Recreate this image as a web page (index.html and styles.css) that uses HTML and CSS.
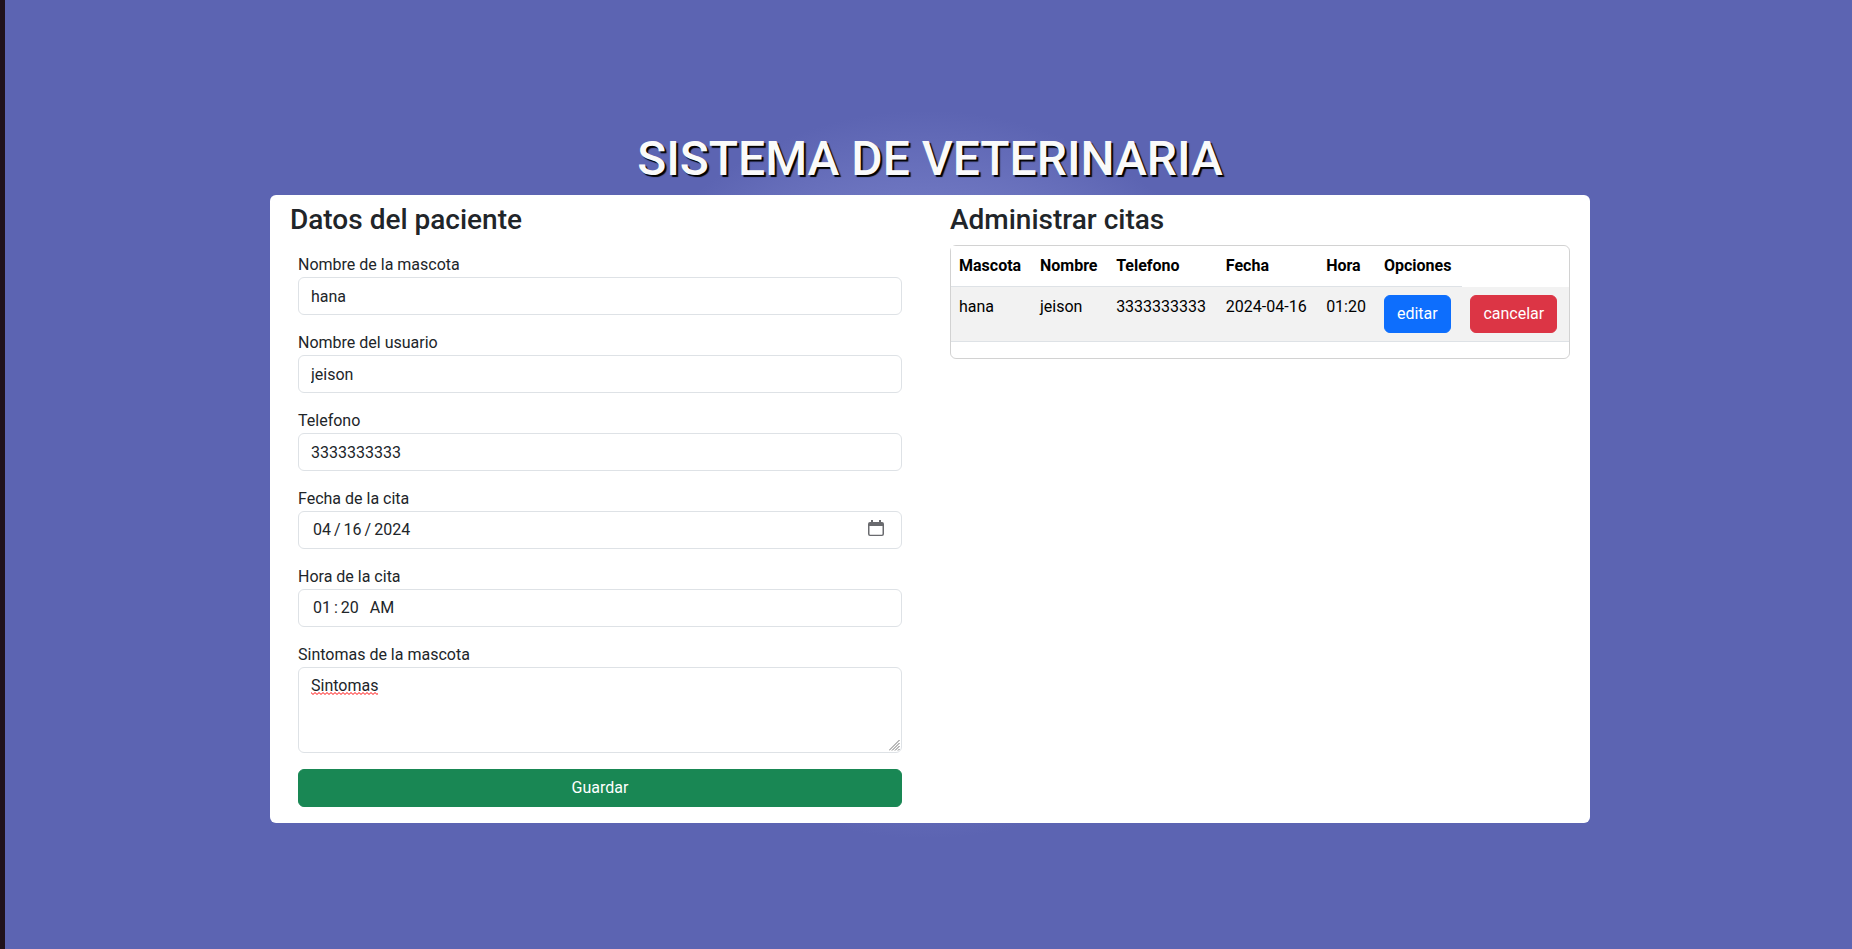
FILE: index.html
```html
<!DOCTYPE html>
<html lang="es">
<head>
<meta charset="utf-8">
<title>Sistema de veterinaria</title>
<link rel="stylesheet" href="styles.css">
</head>
<body>
<main class="container">
  <h1 class="title">SISTEMA DE VETERINARIA</h1>
  <div class="panel">
    <section class="column">
      <h3 class="subtitle">Datos del paciente</h3>
      <form class="form">
        <div class="field">
          <label for="mascota">Nombre de la mascota</label>
          <input class="control" id="mascota" type="text" value="hana">
        </div>
        <div class="field">
          <label for="usuario">Nombre del usuario</label>
          <input class="control" id="usuario" type="text" value="jeison">
        </div>
        <div class="field">
          <label for="telefono">Telefono</label>
          <input class="control" id="telefono" type="text" value="3333333333">
        </div>
        <div class="field">
          <label for="fecha">Fecha de la cita</label>
          <input class="control" id="fecha" type="date" value="2024-04-16">
        </div>
        <div class="field">
          <label for="hora">Hora de la cita</label>
          <input class="control control-time" id="hora" type="time" value="01:20">
        </div>
        <div class="field field-text">
          <label for="sintomas">Sintomas de la mascota</label>
          <textarea class="control" id="sintomas" rows="3" spellcheck="false">Sintomas</textarea>
          <span class="spelling" aria-hidden="true"></span>
        </div>
        <button class="btn btn-success" type="button">Guardar</button>
      </form>
    </section>
    <section class="column">
      <h3 class="subtitle">Administrar citas</h3>
      <div class="card">
        <table class="table">
          <thead>
            <tr><th>Mascota</th><th>Nombre</th><th>Telefono</th><th>Fecha</th><th>Hora</th><th>Opciones</th></tr>
          </thead>
          <tbody>
            <tr>
              <td>hana</td><td>jeison</td><td>3333333333</td><td>2024-04-16</td><td>01:20</td>
              <td><button class="btn btn-primary" type="button">editar</button></td>
              <td><button class="btn btn-danger" type="button">cancelar</button></td>
            </tr>
          </tbody>
        </table>
      </div>
    </section>
  </div>
</main>
</body>
</html>
```
FILE: styles.css
```css
*, *::before, *::after { box-sizing: border-box; }

body {
  margin: 0;
  min-height: 100vh;
  display: flex;
  align-items: center;
  justify-content: center;
  padding: 3px 0 0 3px;
  border-left: 5px solid #20121c;
  background: radial-gradient(circle, #a6aeee 0%, #5c64b2 35%);
  color: #212529;
  font: 400 16px/24px Roboto, sans-serif;
}

.container { width: 100%; max-width: 1320px; }

.title {
  margin: 0 0 6px;
  font-size: 48px;
  line-height: 60px;
  font-weight: 500;
  text-align: center;
  color: #fafafa;
  text-shadow: 2px 2px 1px #000;
}

.panel {
  display: grid;
  grid-template-columns: 1fr 1fr;
  background: #fff;
  border-radius: 6px;
}

.column { padding: 8px 20px; min-width: 0; }

.subtitle {
  margin: 0 0 8px;
  font-size: 28px;
  line-height: 34px;
  font-weight: 500;
}

.form { padding: 8px; }
.field { margin-bottom: 16px; }
.field label { display: block; }

.control {
  display: block;
  width: 100%;
  height: 38px;
  padding: 6px 12px;
  border: 1px solid #dee2e6;
  border-radius: 6px;
  background: #fff;
  color: #212529;
  font: inherit;
}

textarea.control { height: auto; resize: vertical; }

textarea.control::-webkit-resizer {
  background: url("data:image/svg+xml,%3Csvg xmlns='http://www.w3.org/2000/svg' width='12' height='12' fill='none' stroke='%23777'%3E%3Cpath d='M0 10.500L10.500 0M3 10.500L10.500 3M6 10.500L10.500 6M9 10.500L10.500 9'/%3E%3C/svg%3E") right bottom / 12px 12px no-repeat;
}

::-webkit-datetime-edit-month-field,
::-webkit-datetime-edit-day-field,
::-webkit-datetime-edit-year-field,
::-webkit-datetime-edit-hour-field,
::-webkit-datetime-edit-minute-field,
::-webkit-datetime-edit-ampm-field { padding: 0 2px; }

::-webkit-datetime-edit-text { padding: 0 1px; }
::-webkit-datetime-edit-ampm-field { margin-left: 3px; }

::-webkit-calendar-picker-indicator {
  width: 16px;
  height: 16px;
  padding: 0;
  margin: 0 5px 4px 24px;
  background: url("data:image/svg+xml,%3Csvg xmlns='http://www.w3.org/2000/svg' viewBox='0 0 16 16' fill='%23696a6e'%3E%3Cpath fill-rule='evenodd' d='M3 0h2v2h6V0h2v2h1a2 2 0 0 1 2 2v10a2 2 0 0 1-2 2H2a2 2 0 0 1-2-2V4a2 2 0 0 1 2-2h1zM1.500 6v8q0 .7.7.7h11.600q.7 0 .7-.7V6z'/%3E%3C/svg%3E") center / 16px 16px no-repeat;
}

.control-time::-webkit-calendar-picker-indicator { display: none; }

.field-text { position: relative; }

/* Spell-check mark below the first word */
.spelling {
  position: absolute;
  left: 13px;
  top: 49px;
  width: 67px;
  height: 3px;
  pointer-events: none;
  background: url("data:image/svg+xml,%3Csvg xmlns='http://www.w3.org/2000/svg' width='4' height='3' fill='none' stroke='%23f00'%3E%3Cpath d='M-1 1.500L0 .5L2 2.500L4 .5L5 1.500'/%3E%3C/svg%3E") left top / 4px 3px repeat-x;
}

.btn {
  display: block;
  padding: 6px 12px;
  border: 1px solid transparent;
  border-radius: 6px;
  color: #fff;
  font: inherit;
  cursor: pointer;
}

.btn-success { width: 100%; background: #198754; border-color: #198754; }
.btn-primary { background: #0d6efd; border-color: #0d6efd; }
.btn-danger { background: #dc3545; border-color: #dc3545; }

.card {
  border: 1px solid rgba(0, 0, 0, 0.175);
  border-radius: 6px;
}

.table {
  width: 100%;
  margin-bottom: 16px;
  border-collapse: collapse;
  color: #000;
}

.table th, .table td {
  padding: 8px;
  border-bottom: 1px solid #dee2e6;
  text-align: left;
  vertical-align: top;
  background: #fff;
}

.table th { font-weight: 700; }
.table td { background: #f2f2f2; }
```
